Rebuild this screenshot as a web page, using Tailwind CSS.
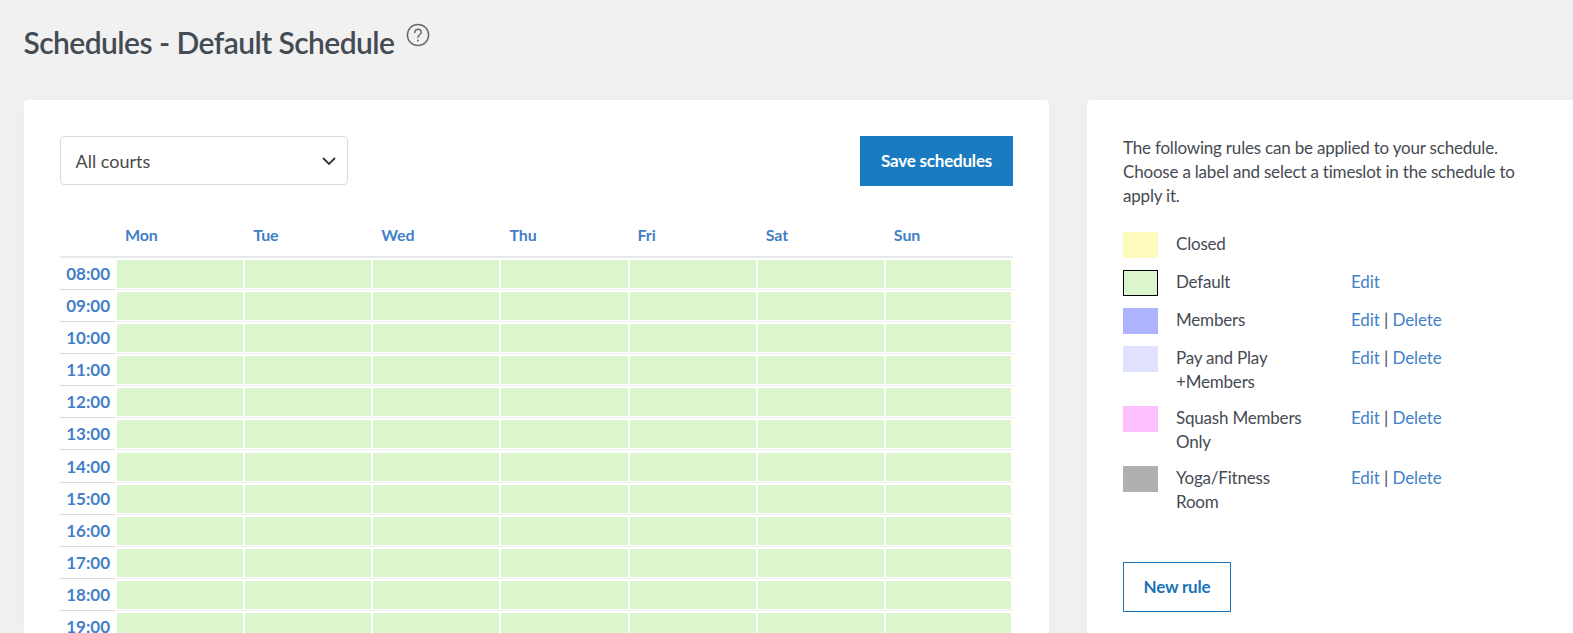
<!DOCTYPE html>
<html lang="en">
<head>
  <meta charset="UTF-8" />
  <title>Schedules</title>
  <script src="https://cdn.jsdelivr.net/npm/@tailwindcss/browser@4"></script>
</head>
<body class="h-[633px] overflow-hidden bg-[#f1f1f1] font-['Lato',sans-serif] text-[#464a53]">

<!-- Page header -->
<div class="ml-[23.5px] h-[75px] border-b border-[#ececec] pt-[22px] flex items-start">
  <h1 class="text-[30px] tracking-[-0.56px] leading-[40px] font-semibold text-[#434b54]">Schedules - Default Schedule</h1>
  <svg class="ml-[12px] mt-[1px]" width="24" height="24" viewBox="0 0 24 24" fill="none" stroke="#666a70" stroke-width="1.5">
    <circle cx="12" cy="12" r="10.6"/>
    <path d="M8.8 9.4c0-1.9 1.4-3.1 3.2-3.1s3.2 1.2 3.2 2.9c0 2.5-3.2 2.6-3.2 5.2" stroke-linecap="round"/>
    <circle cx="12" cy="17.6" r="1" fill="#666a70" stroke="none"/>
  </svg>
</div>

<div class="flex items-start pl-[24px] pt-[25px] gap-[38px]">
  <!-- Schedule card -->
  <div class="w-[1025px] h-[533px] overflow-hidden shrink-0 bg-white rounded-t-[4px] pt-[36px] px-[36px] shadow-[0_0_24px_rgba(0,0,0,0.03)]">
    <div class="flex items-start justify-between">
      <div class="w-[288px] h-[49px] border border-[#dcdcdc] rounded-[4px] flex items-center justify-between pl-[14.5px] pr-[11px] pt-[2px] text-[18px] text-[#4a4a4a]">
        <span>All courts</span>
        <svg width="14" height="9" viewBox="0 0 14 9" fill="none" stroke="#333" stroke-width="1.8"><path d="M1 1l6 6 6-6"/></svg>
      </div>
      <button class="w-[153px] h-[50px] bg-[#1a7bc1] text-white text-[17px] tracking-[-0.2px] font-bold">Save schedules</button>
    </div>

    <!-- Days -->
    <div class="mt-[37px] grid grid-cols-[57px_repeat(7,128.15px)] h-[35px] border-b-2 border-[#e8e9ee] text-[16px] tracking-[-0.1px] font-bold text-[#437fc7]">
      <div></div>
      <div class="pl-[8px]">Mon</div>
      <div class="pl-[8px]">Tue</div>
      <div class="pl-[8px]">Wed</div>
      <div class="pl-[8px]">Thu</div>
      <div class="pl-[8px]">Fri</div>
      <div class="pl-[8px]">Sat</div>
      <div class="pl-[8px]">Sun</div>
    </div>

    <!-- Time rows -->
    <div id="rows" class="pt-[2px]">
      <div class="grid grid-cols-[57px_repeat(7,128.15px)] h-[32.1px] text-[17px] font-bold text-[#437fc7]">
        <div class="h-[30px] mr-[2px] border-b border-[#d9d9d9] text-right pr-[5px] leading-[28px]">08:00</div>
        <div class="h-[30px] border-b border-[#eeeeee] pb-[1px] pr-[2px] bg-clip-content bg-[#dbf6cd]"></div>
        <div class="h-[30px] border-b border-[#eeeeee] pb-[1px] pr-[2px] bg-clip-content bg-[#dbf6cd]"></div>
        <div class="h-[30px] border-b border-[#eeeeee] pb-[1px] pr-[2px] bg-clip-content bg-[#dbf6cd]"></div>
        <div class="h-[30px] border-b border-[#eeeeee] pb-[1px] pr-[2px] bg-clip-content bg-[#dbf6cd]"></div>
        <div class="h-[30px] border-b border-[#eeeeee] pb-[1px] pr-[2px] bg-clip-content bg-[#dbf6cd]"></div>
        <div class="h-[30px] border-b border-[#eeeeee] pb-[1px] pr-[2px] bg-clip-content bg-[#dbf6cd]"></div>
        <div class="h-[30px] border-b border-[#eeeeee] pb-[1px] pr-[3px] bg-clip-content bg-[#dbf6cd]"></div>
      </div>
    </div>
  </div>

  <!-- Rules card -->
  <div class="w-[500px] h-[533px] overflow-hidden shrink-0 bg-white rounded-t-[4px] pt-[36px] pl-[36px] text-[17px] tracking-[-0.2px] leading-[24px] shadow-[0_0_24px_rgba(0,0,0,0.03)]">
    <p class="w-[400px]">The following rules can be applied to your schedule. Choose a label and select a timeslot in the schedule to apply it.</p>

    <div class="mt-[24px] flex flex-col w-[360px]">
      <div class="flex h-[38px]">
        <div class="w-[35px] h-[26px] bg-[#fdfabe]"></div>
        <div class="ml-[18px] w-[175px]">Closed</div>
      </div>
      <div class="flex h-[38px]">
        <div class="w-[35px] h-[26px] bg-[#dbf6cd] border border-black"></div>
        <div class="ml-[18px] w-[175px]">Default</div>
        <div class="text-[#437fc7] tracking-[-0.1px]">Edit</div>
      </div>
      <div class="flex h-[38px]">
        <div class="w-[35px] h-[26px] bg-[#aeb3ff]"></div>
        <div class="ml-[18px] w-[175px]">Members</div>
        <div class="text-[#437fc7] tracking-[-0.1px]">Edit <span class="text-[#464a53]">|</span> Delete</div>
      </div>
      <div class="flex h-[60px]">
        <div class="w-[35px] h-[26px] bg-[#e0e0ff]"></div>
        <div class="ml-[18px] w-[175px]">Pay and Play<br />+Members</div>
        <div class="text-[#437fc7] tracking-[-0.1px]">Edit <span class="text-[#464a53]">|</span> Delete</div>
      </div>
      <div class="flex h-[60px]">
        <div class="w-[35px] h-[26px] bg-[#fcc0ff]"></div>
        <div class="ml-[18px] w-[175px]">Squash Members<br />Only</div>
        <div class="text-[#437fc7] tracking-[-0.1px]">Edit <span class="text-[#464a53]">|</span> Delete</div>
      </div>
      <div class="flex h-[60px]">
        <div class="w-[35px] h-[26px] bg-[#b0b0b0]"></div>
        <div class="ml-[18px] w-[175px]">Yoga/Fitness<br />Room</div>
        <div class="text-[#437fc7] tracking-[-0.1px]">Edit <span class="text-[#464a53]">|</span> Delete</div>
      </div>
    </div>

    <button class="mt-[36px] w-[108px] h-[50px] border border-[#1a73b8] text-[#1a73b8] text-[17px] tracking-[-0.2px] font-bold">New rule</button>
  </div>
</div>

<script>
// fill in the remaining hours from the first row
const rows = document.getElementById('rows');
const first = rows.firstElementChild;
['09:00','10:00','11:00','12:00','13:00','14:00','15:00','16:00','17:00','18:00','19:00'].forEach(t => {
  const row = first.cloneNode(true);
  row.firstElementChild.textContent = t;
  rows.appendChild(row);
});
</script>
</body>
</html>
